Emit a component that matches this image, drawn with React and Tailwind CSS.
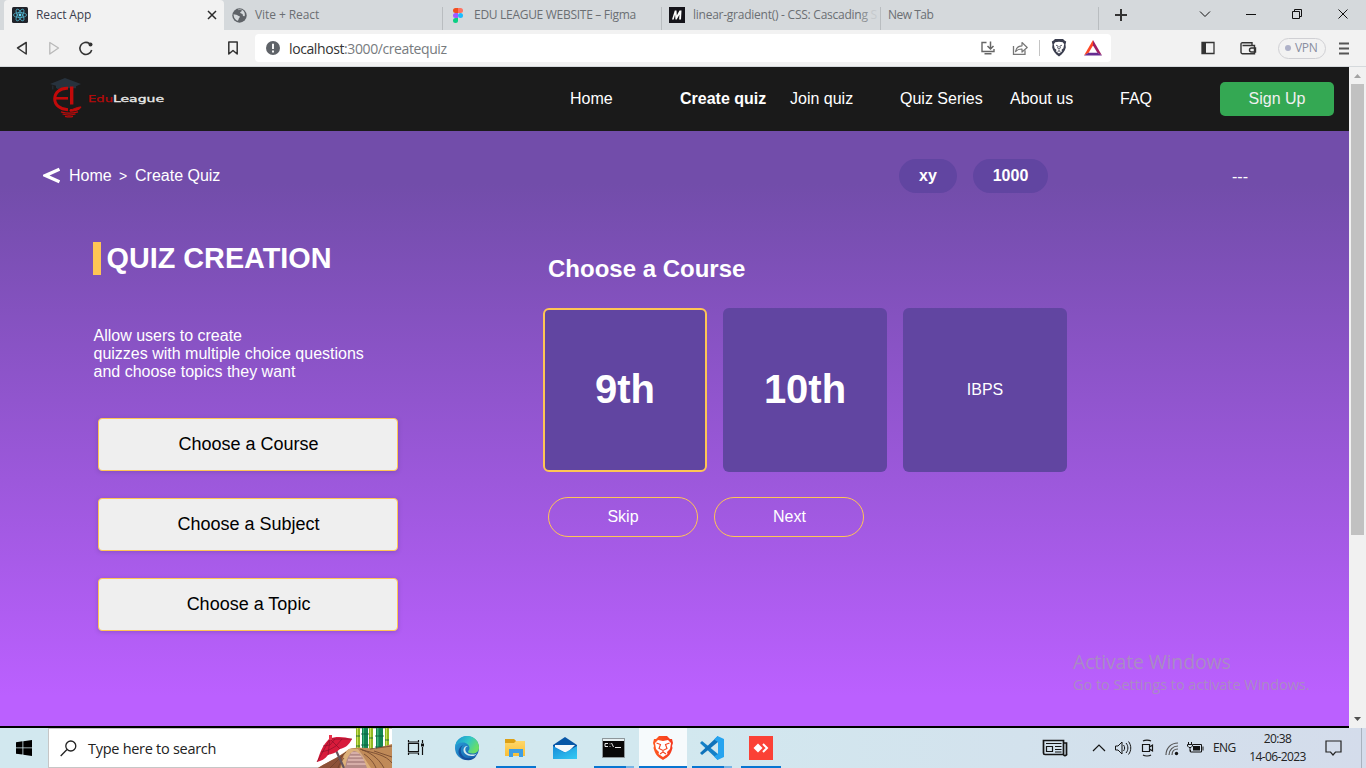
import React from "react";

const ui = "font-['Open_Sans','Noto_Sans',sans-serif]";

function ReactLogo() {
  return (
    <svg className="size-4 shrink-0" viewBox="0 0 16 16">
      <rect width="16" height="16" rx="1.5" fill="#20232a" />
      <g fill="none" stroke="#4fb3cc" strokeWidth="0.8">
        <ellipse cx="8" cy="8" rx="6.6" ry="2.5" />
        <ellipse cx="8" cy="8" rx="6.6" ry="2.5" transform="rotate(60 8 8)" />
        <ellipse cx="8" cy="8" rx="6.6" ry="2.5" transform="rotate(120 8 8)" />
      </g>
      <circle cx="8" cy="8" r="1.4" fill="#61dafb" />
    </svg>
  );
}

function GlobeIcon() {
  return (
    <svg className="size-[15px] shrink-0" viewBox="0 0 15 15">
      <circle cx="7.5" cy="7.5" r="7.2" fill="#5f6368" />
      <path d="M1.6 6.2c2 .2 3.4.6 4.200 1.400.5.600 1.400.200 1.900.900.500.800-.5 1.300-.9 2-.3.600-.2 1.400-1 2.300C3.500 12.200 1.500 9.500 1.600 6.200z" fill="#d5d9dc" />
      <path d="M6 2.300c1.500-.9 3-.4 4 .2-.2 1-1 1-1.600 1.500-.6.600.1 1.300.900 1.400 1 .2 1.600.8 1.500 1.700-.1 1 .8 1.300 1.900.9C13.500 5 12 2 8.500 1.400 7 1.200 5.800 1.700 6 2.300z" fill="#d5d9dc" />
    </svg>
  );
}

function FigmaIcon() {
  return (
    <svg className="h-[15px] w-2.5 shrink-0" viewBox="0 0 10 15">
      <path d="M2.500 0H5v5H2.500a2.500 2.500 0 010-5z" fill="#f24e1e" />
      <path d="M5 0h2.500a2.500 2.500 0 010 5H5z" fill="#ff7262" />
      <path d="M2.500 5H5v5H2.500a2.500 2.500 0 010-5z" fill="#a259ff" />
      <circle cx="7.500" cy="7.500" r="2.500" fill="#1abcfe" />
      <path d="M2.500 10H5v2.500A2.500 2.500 0 112.500 10z" fill="#0acf83" />
    </svg>
  );
}

function MdnIcon() {
  return (
    <svg className="size-4 shrink-0" viewBox="0 0 16 16">
      <rect width="16" height="16" fill="#15141a" />
      <path d="M3 12.500L5.800 3.500h1.700l.3 5 2.700-5h2l-.5 9h-1.900l.4-5-2.800 5H6.500l-.4-5-1.400 5z" fill="#fff" />
    </svg>
  );
}

function Tabs() {
  return (
    <div className={`flex h-[30px] bg-[#d5d9dc] pl-1 text-[12px] text-[#6b6f73] ${ui}`}>
      <div className="flex w-[220px] items-center rounded-t bg-[#f2f2f2] pl-2 text-[#3b3e4f]">
        <ReactLogo />
        <span className="ml-2 flex-1 whitespace-nowrap tracking-[-0.1px]">React App</span>
        <svg className="mr-[7px] size-2.5" viewBox="0 0 10 10"><path d="M1 1l8 8M9 1L1 9" stroke="#2b2b2b" strokeWidth="1.500" /></svg>
      </div>
      <div className="flex w-[218px] items-center pl-2">
        <GlobeIcon />
        <span className="ml-2 whitespace-nowrap tracking-[-0.080px]">Vite + React</span>
      </div>
      <div className="flex w-[219px] items-center">
        <i className="mt-[7px] h-[23px] w-px bg-[#b9bdc0]" />
        <span className="ml-2.5 flex"><FigmaIcon /></span>
        <span className="ml-[11px] whitespace-nowrap tracking-[-0.290px]">EDU LEAGUE WEBSITE – Figma</span>
      </div>
      <div className="flex w-[219px] items-center">
        <i className="mt-[7px] h-[23px] w-px shrink-0 bg-[#b9bdc0]" />
        <span className="ml-[7px] flex"><MdnIcon /></span>
        <span className="ml-2 whitespace-nowrap tracking-[-0.250px]">linear-gradient() - CSS: Cascadin<span className="text-[#8d9194]">g</span> <span className="text-[#c6cacd]">S</span></span>
      </div>
      <div className="flex w-[219px] items-center">
        <i className="mt-[7px] h-[23px] w-px bg-[#b9bdc0]" />
        <span className="ml-[7px] flex-1 whitespace-nowrap tracking-[-0.500px]">New Tab</span>
        <i className="mt-[7px] h-[23px] w-px bg-[#b9bdc0]" />
      </div>
      <svg className="h-[30px] w-[267px]" viewBox="1099 0 267 30" fill="none" stroke="#111">
        <path d="M1115 15h12M1121 9v12" stroke="#333" strokeWidth="2" />
        <path d="M1200 11.500l5 5 5-5" />
        <path d="M1246 14.500h10" />
        <path d="M1292.500 11.500h7v7h-7zM1294.500 11.500v-2h7v7h-2" />
        <path d="M1338.500 9.500l9 9M1347.500 9.500l-9 9" />
      </svg>
    </div>
  );
}

function Toolbar() {
  return (
    <div className={`flex h-[37px] items-center border-b border-[#d5d9dc] bg-[#f2f2f2] ${ui}`}>
      <svg className="h-9 w-[255px] shrink-0" viewBox="0 30 255 36" fill="none" strokeLinejoin="round">
        <path d="M26.200 42.500v11.500L17.500 48z" stroke="#333" strokeWidth="1.500" />
        <path d="M49.800 42.500v11.500l8.700-6z" stroke="#b9b9b9" strokeWidth="1.300" />
        <path d="M89.500 43.600A6 6 0 1 0 91.700 50" stroke="#333" strokeWidth="1.600" />
        <circle cx="90.500" cy="44.600" r="2" fill="#333" />
        <path d="M228.800 42h8.400v12l-4.200-3.500-4.200 3.500z" stroke="#333" strokeWidth="1.500" />
      </svg>
      <div className="flex h-7 w-[856px] shrink-0 items-center rounded bg-white">
        <svg className="ml-[11px] size-[14px]" viewBox="0 0 14 14">
          <circle cx="7" cy="7" r="7" fill="#5f6368" />
          <path d="M7 2.800v5.200M7 9.600v1.800" stroke="#fff" strokeWidth="1.900" />
        </svg>
        <span className="ml-[9px] flex-1 whitespace-nowrap text-[14px] tracking-[-0.4px] text-[#777b7e]">
          <span className="text-[#333]">localhost</span>:3000/createquiz
        </span>
        <svg className="h-7 w-[134px]" viewBox="977 34 134 28" fill="none">
          <path d="M986.500 42.500h-4.500v9h12V49M984.500 53.800h7" stroke="#666" strokeWidth="1.400" />
          <path d="M990.500 41.500v7M987.500 46l3 3 3-3" stroke="#666" strokeWidth="1.500" />
          <path d="M1013.500 46v8.300h11.500v-4" stroke="#777" strokeWidth="1.300" />
          <path d="M1015.500 51.500c.5-3.800 3-5.500 6.500-5.700v-3.300l5.200 5-5.200 4.500v-3c-3-.1-4.800.8-6.500 2.500z" stroke="#777" strokeWidth="1.200" strokeLinejoin="round" />
          <path d="M1039.500 40v16" stroke="#c4c4c4" />
          <path d="M1055 39h8l1.500 1.500 1.700 1-.7 3 .3 3c-.8 3.500-3 6.300-6.800 9-3.800-2.700-6-5.500-6.800-9l.3-3-.7-3 1.700-1z" fill="#3b3e4f" />
          <path d="M1055.200 42.300l3.800-.6 3.800.6 1.400 2-.8 3.900-1.800 1.500.3 1.700-2.900 2.200-2.900-2.200.3-1.700-1.800-1.500-.8-3.900z" fill="#fff" />
          <path d="M1056 45.200l2.200.9-.6 2 1.400.8 1.400-.8-.6-2 2.200-.9M1059 49.500v1.400l-1.500.8M1059 50.900l1.500.8" stroke="#3b3e4f" strokeWidth=".8" />
          <path d="M1093 40l-9 15.500 4.500-2.500 4.500-7.500z" fill="#ff4724" />
          <path d="M1093 40l9 15.500-4.500-2.500-4.500-7.500z" fill="#9e1f63" />
          <path d="M1084 55.500l4.500-2.700h9l4.500 2.700z" fill="#662d91" />
        </svg>
      </div>
      <svg className="h-9 w-[167px]" viewBox="1111 30 167 36" fill="none">
        <path d="M1202 42.500h12v11h-12z" stroke="#333" strokeWidth="1.300" />
        <path d="M1202 42.500h4v11h-4z" fill="#333" />
        <path d="M1242.500 45.500h12v8.200h-12a1.500 1.500 0 01-1.500-1.500v-8.200a1.200 1.200 0 011.500-1.200h9.500v2.500M1255.500 48h-4a2 2 0 000 4h4z" stroke="#333" strokeWidth="1.400" />
      </svg>
      <div className="flex h-[21px] w-12 items-center rounded-full border border-[#d0d0d4] pl-[6px] text-[12px] tracking-[-0.3px] text-[#888da0]">
        <i className="mr-1 size-1.5 rounded-full bg-[#aeb1c8]" />VPN
      </div>
      <svg className="ml-[13px] h-[13px] w-2.5" viewBox="0 0 10 13"><path d="M0 1.500h10M0 6.500h10M0 11.500h10" stroke="#555" strokeWidth="1.900" /></svg>
    </div>
  );
}

function EduLogo() {
  return (
    <svg className="ml-[48px] h-11 w-[120px] self-center" viewBox="48 77 120 44">
      <path d="M50 84l15-6 16 6-5 2.300v2H69c-4-1.600-8-1-11 1l-2-1.500v-2z" fill="#27323d" />
      <path d="M52.800 85.500v4" stroke="#27323d" />
      <g fill="none" stroke="#c20a0a">
        <path d="M68 88.200c-8-.5-13.300 4.500-13.300 10.600S60 109.500 68 109.800" strokeWidth="3" />
        <path d="M56 98.300h12" strokeWidth="2.600" />
        <path d="M71.700 86.500v18" strokeWidth="3.400" />
        <path d="M70 109.800c3.500 0 6-2.700 11-2.900-1 2.500-4 4-11 4.300z" strokeWidth="1" fill="#c20a0a" />
        <path d="M61 111.800c5 1.600 11 1.600 17 0M62.500 114c4 1.300 9 1.300 13 0M65 116.300c3 .7 6 .7 8 0" strokeWidth="1.300" />
      </g>
      <text x="88" y="102" fontFamily="DejaVu Sans" fontSize="9.500" fill="#b80a0a" stroke="#b80a0a" strokeWidth=".25" textLength="25" lengthAdjust="spacingAndGlyphs">Edu</text>
      <text x="113" y="102" fontFamily="DejaVu Sans" fontSize="9.500" fill="#e8e8e8" stroke="#e8e8e8" strokeWidth=".35" textLength="51" lengthAdjust="spacingAndGlyphs">League</text>
    </svg>
  );
}

const navItems = ["Home", "Create quiz", "Join quiz", "Quiz Series", "About us", "FAQ"];

function Navbar() {
  return (
    <nav className="flex h-16 items-center bg-[#1a1a1a] text-[16px] text-white">
      <EduLogo />
      <ul className="ml-[402px] flex">
        {navItems.map((n) => (
          <li key={n} className={n === "Create quiz" ? "w-[110px] whitespace-nowrap font-bold" : n === "FAQ" ? "w-[100px]" : "w-[110px] whitespace-nowrap"}>{n}</li>
        ))}
      </ul>
      <button className="h-[34px] w-[114px] rounded-[5px] bg-[#34a853] text-[#f0f0f0]">Sign Up</button>
    </nav>
  );
}

function QuizPage() {
  return (
    <main className="h-[595px] bg-[linear-gradient(180deg,#724daa_8.85%,#bb60ff_95%)] pt-7 text-[16px] text-white">
      <div className="flex h-[34px] items-center">
        <svg className="mb-0.5 ml-[43px] h-[17px] w-[17px]" viewBox="0 0 17 17"><path d="M16.500 2.200L2.500 8.500l14 6.300" fill="none" stroke="#fff" strokeWidth="3.400" /></svg>
        <span className="ml-[9px] w-[50px]">Home</span>
        <span className="w-4 text-[14px]">&gt;</span>
        <span className="w-[764px]">Create Quiz</span>
        <span className="flex h-[34px] w-[58px] items-center justify-center rounded-full bg-[#6145a1] font-bold">xy</span>
        <span className="ml-4 flex h-[34px] w-[75px] items-center justify-center rounded-full bg-[#6145a1] font-bold">1000</span>
        <span className="ml-[184px] pt-0.5">---</span>
      </div>
      <div className="flex">
        <section className="ml-[93px] mt-[49px] w-[450px]">
          <h1 className="border-l-8 border-[#ffc554] pl-[5.500px] text-[28.8px] font-bold leading-[32px] pb-px">QUIZ CREATION</h1>
          <p className="mt-[52px] pl-[0.500px] leading-[18px]">
            Allow users to create<br />quizzes with multiple choice questions<br />and choose topics they want
          </p>
          <div className="ml-[5px] mt-[37px] flex w-[300px] flex-col gap-[27px] text-[18px] text-black">
            {["Choose a Course", "Choose a Subject", "Choose a Topic"].map((t) => (
              <button key={t} className="h-[53px] rounded border border-[#ffc554] bg-[#efefef] pb-px pl-px shadow-[0_1px_4px_rgba(90,60,130,0.35)]">{t}</button>
            ))}
          </div>
        </section>
        <section className="mt-[62px]">
          <h2 className="ml-[5px] text-[24px] font-bold leading-7">Choose a Course</h2>
          <div className="mt-[25px] flex gap-4">
            <div className="flex size-[164px] items-center justify-center rounded-md border-2 border-[#ffc554] bg-[#6145a1] pb-0.5 text-[40px] font-bold">9th</div>
            <div className="flex size-[164px] items-center justify-center rounded-md bg-[#6145a1] pb-0.5 text-[40px] font-bold">10th</div>
            <div className="flex size-[164px] items-center justify-center rounded-md bg-[#6145a1]">IBPS</div>
          </div>
          <div className="ml-[5px] mt-[25px] flex gap-4">
            <button className="h-10 w-[150px] rounded-full border border-[#ffc554] pb-px">Skip</button>
            <button className="h-10 w-[150px] rounded-full border border-[#ffc554] pb-px pl-px">Next</button>
          </div>
        </section>
      </div>
    </main>
  );
}

function Scrollbar() {
  return (
    <div className="flex w-[17px] flex-col items-center bg-[#f1f1f1]">
      <svg className="h-[17px] w-[17px]" viewBox="0 0 17 17"><path d="M5 11l3.500-4 3.500 4z" fill="#a3a3a3" /></svg>
      <div className="h-[451px] w-[13px] bg-[#c1c1c1]" />
      <svg className="mt-auto h-[17px] w-[17px]" viewBox="0 0 17 17"><path d="M5 6l3.500 4L12 6z" fill="#505050" /></svg>
    </div>
  );
}

function SearchArt() {
  return (
    <svg className="h-10 w-[76px]" viewBox="316 728 76 40">
      <path d="M356 728h4v26h-4zM369 728h4v26h-4zM385 728h4v28h-4z" fill="#91b821" />
      <path d="M362 728h6v26h-6zM376 728h7v28h-7z" fill="#108354" />
      <path d="M357 728h1v26h-1zM370 728h1v26h-1zM386 728h1v28h-1z" fill="#c8df59" />
      <path d="M363 728h1v26h-1zM377 728h1.500v28h-1.500z" fill="#3fb47c" />
      <path d="M356 736h4M356 746h4M361 734h8M361 745h8M369 738h4M375 736h9M375 747h9M385 740h4" stroke="#0a583c" strokeWidth=".8" />
      <path d="M318 768c9-6 17-8 31-19 8-2 18-1 25 0l18-5v24z" fill="#c08a58" />
      <path d="M318 768c9-6 18-9 26-15l-4 15z" fill="#8c5138" />
      <path d="M345 768c1-9 4-18 9-18 8 0 11 8 15 18z" fill="#b58b88" />
      <path d="M351 753h8M349.500 756.500h12M348 760h16M347 764h19" stroke="#e1bbb2" strokeWidth="1.300" />
      <path d="M349 749h9l13 19h-4c-3-9-6-16-13-17-5 2-8 9-9 17h-4c1-9 4-16 8-19z" fill="#dcb07a" />
      <path d="M360 749c9 3 18 8 24 19M362 750c12 3 24 5 30 13M346 752c-6 6-10 10-16 16M344 758c-4 5-5 7-6 10M364 754c6 4 10 9 12 14M370 749l22-3M374 751l18 6" stroke="#6d432c" fill="none" strokeWidth=".8" />
      <path d="M334 746l10 22" stroke="#65545c" strokeWidth="2.200" />
      <path d="M317 762c3-9 5-16 12-23 7-3 15-2 23 0-3 6-7 9-12 10-4 4-9 5-12 6-3 4-7 6-11 7z" fill="#d81b3b" />
      <path d="M330 739l-13 23M330 739l-2 16M330 739l10 10M330 739l22 0M321 752l8-2 7-4 6-7M323 746l7-1 5-6" stroke="#8c1029" fill="none" strokeWidth=".7" />
      <path d="M329 735h3v5h-3z" fill="#e8314b" />
    </svg>
  );
}

function TaskIcons() {
  return (
    <svg className="h-10 w-[400px] shrink-0" viewBox="392 728 400 40">
      <defs>
        <linearGradient id="edgeBlue" x1="0" y1="0" x2="1" y2="1"><stop stopColor="#2aa5dc" /><stop offset="1" stopColor="#1557a8" /></linearGradient>
        <linearGradient id="edgeTop" x1="0" y1="0" x2="1" y2=".5"><stop stopColor="#178ed6" /><stop offset=".55" stopColor="#32c6c7" /><stop offset="1" stopColor="#6adf65" /></linearGradient>
        <linearGradient id="folder" x1="0" y1="0" x2="0" y2="1"><stop stopColor="#ffda70" /><stop offset="1" stopColor="#f9bf37" /></linearGradient>
        <linearGradient id="mail" x1="0" y1="0" x2="1" y2="1"><stop stopColor="#168bd8" /><stop offset="1" stopColor="#35cbf4" /></linearGradient>
        <linearGradient id="lion" x1="0" y1="0" x2="1" y2="0"><stop stopColor="#ff5a21" /><stop offset="1" stopColor="#f4381f" /></linearGradient>
      </defs>
      <g stroke="#111" fill="none">
        <path d="M408.500 743.500h10v8h-10zM408.500 740v2h10v-2M408.500 755v-2h10v2M422.500 740v3M422.500 747v8" strokeWidth="1.200" />
        <path d="M421 743.500h3v3h-3z" fill="#111" stroke="none" />
      </g>
      <circle cx="467" cy="748" r="12" fill="url(#edgeBlue)" />
      <path d="M455 747c1-7 6-11 12-11 8 0 12 6 12 11.500 0 4-3 6-6.500 6-3 0-4.500-1-4.500-2 0-.8 1.500-1.200 1.500-3.500 0-3-3-5.500-6.500-5.500-4 0-7 2-8 4.500z" fill="url(#edgeTop)" />
      <path d="M463 745c-3 3-3 8 0 11 3 3 8 3 13.500 0-4 5-9 5-13.500 3-6-4-6-11 0-14z" fill="#174f9c" />
      <path d="M468 746c-3 1-3.500 4-1.500 6.500 2.500 2.500 7 2.700 10.500.9-1.500 1.600-3 2.600-5 2.600-5 .3-9-3-8.500-6.500.3-2 2-4 4.500-3.500z" fill="#d5e9f0" />
      <path d="M505 739h9l2 2h9v15h-20z" fill="url(#folder)" />
      <path d="M505 739h9l2 2-2 2h-9z" fill="#dca016" />
      <path d="M509 757v-8h14v8h-4v-4h-6v4z" fill="#3e9ee3" />
      <path d="M553 745l12-8 12 8v14h-24z" fill="#0756a6" />
      <path d="M555 745h20l-8 8-12-3z" fill="#f5f8fb" />
      <path d="M553 746l13 7-13 6z" fill="#168dd9" />
      <path d="M553 759v-12l24 12zM577 746v13h-24z" fill="url(#mail)" />
      <path d="M602.500 738.500h22v19h-22z" fill="#080808" stroke="#8d969a" />
      <path d="M603 739h21v2h-21z" fill="#e6eef0" />
      <path d="M608 743.500h-3v3h3M610 743.500v.8M610 746v.8M611.500 743l2 4M615 747.500h6" stroke="#e9e9e9" fill="none" />
      <path d="M639 728h48v40h-48z" fill="#f6fafc" />
      <path d="M659 736h8l3 3h2l1 4-1 3 .5 2c-1.500 6-4 9-9.500 12-5.500-3-8-6-9.500-12l.5-2-1-3 1-4h2z" fill="url(#lion)" />
      <path d="M658 740l5 1 5-1 3 3-1 6-3 3 .5 2-4.500 3-4.500-3 .5-2-3-3-1-6z" fill="#fff" />
      <path d="M656.500 743l4 1.500-1.500 4 4 2 4-2-1.500-4 4-1.500M663 750v2l-3 2M663 752l3 2" stroke="#f4431f" fill="none" strokeWidth="1.100" />
      <path d="M700 743l2-2 16 13v6z" fill="#1480c7" />
      <path d="M700 753l2 2 16-13v-6z" fill="#0f72ba" />
      <path d="M717.500 736l6.500 3v18l-6.500 3-3.500-3.500 4-2.500v-12l-4-2.500z" fill="#27a4ef" />
      <path d="M749 736h24v24h-24z" fill="#fb4136" />
      <path d="M758 743.500l4.500 4.500-4.500 4.500-4.500-4.500z" fill="#fff" />
      <path d="M763 744l4 4-4 4" stroke="#fff" strokeWidth="2" fill="none" />
      <path d="M496 766h40v2h-40zM594 766h32v2h-32zM639 766h48v2h-48zM692 766h32v2h-32zM741 766h40v2h-40z" fill="#0875d1" />
      <path d="M626 766h8v2h-8zM724 766h8v2h-8z" fill="#77b4e5" />
    </svg>
  );
}

function Taskbar() {
  return (
    <footer className={`flex h-10 items-center bg-gradient-to-r from-[#d2e8ef] from-50% to-[#d4dceb] text-[#222] ${ui}`}>
      <svg className="ml-4 h-4 w-4 shrink-0" viewBox="0 0 16 16"><path d="M0 2.200L6.500 1.300v6.200H0zM7.300 1.200L16 0v7.500H7.300zM0 8.300h6.500v6.200L0 13.700zM7.300 8.300H16V16l-8.700-1.300z" fill="#000" /></svg>
      <div className="ml-4 flex h-10 w-[344px] shrink-0 items-center border border-r-0 border-[#c6c6c6] bg-white">
        <svg className="ml-[11px] h-[17px] w-[17px]" viewBox="0 0 17 17" fill="none" stroke="#222" strokeWidth="1.300"><circle cx="10.800" cy="6" r="5" /><path d="M7 9.500L.700 16" /></svg>
        <span className="ml-[11px] flex-1 whitespace-nowrap pt-px text-[14.500px] tracking-[-0.280px]">Type here to search</span>
        <SearchArt />
      </div>
      <TaskIcons />
      <svg className="h-10 w-[418px] shrink-0" viewBox="792 728 418 40" fill="none" stroke="#151515" strokeWidth="1.200">
        <path d="M1043.500 740.500h20v14h-18.500a1.500 1.500 0 01-1.500-1.500zM1063.500 743h3v10.500a1.500 1.500 0 01-3 1" strokeWidth="1.700" />
        <path d="M1046 743.500h15.500M1055 746.500h6.500M1055 749.500h6.500M1055 752h6.500M1046.500 746.500h6v5h-6z" />
        <path d="M1093 751l6-6 6 6" />
        <path d="M1115.500 746h2.500l4-4v12l-4-4h-2.500zM1123.500 745c1.500 2 1.500 4 0 6M1126 743c2.500 3 2.500 7 0 10M1128.500 741.500c3 4 3 9 0 13" strokeWidth="1" />
        <path d="M1142.500 744.500h7v7h-7zM1149.500 747l3-2v6l-3-2M1143 741c2-1.300 6-1.300 8 0M1143 755c2 1.300 6 1.300 8 0" />
        <path d="M1166 755c0-7 5-12 12-12M1169 755c0-5 4-9 9-9M1172 755c0-4 2-6 6-6" stroke="#555" />
        <circle cx="1176.500" cy="753.500" r="1.700" fill="#111" stroke="none" />
        <path d="M1193 744.500h8.500v7.500h-11v-2M1203 746.500v4" strokeWidth="1" />
        <path d="M1193 746h7v4.500h-7z" fill="#111" stroke="none" />
        <path d="M1188.500 742v2.500M1191.500 742v2.500M1187.500 744.500h5v1.500l-1.500 1.500h-2l-1.500-1.500zM1190 748v3.500" strokeWidth="1" />
      </svg>
      <span className="ml-[3px] w-9 whitespace-nowrap text-[12px] tracking-[-0.6px]">ENG</span>
      <div className="flex w-[57px] shrink-0 flex-col items-center whitespace-nowrap text-[12px] leading-[18px] tracking-[-0.6px]">
        <span>20:38</span><span>14-06-2023</span>
      </div>
      <svg className="ml-[19px] h-4 w-[17px]" viewBox="0 0 17 16"><path d="M1 1h15v11h-5.500L8 15l-2.500-3H1z" fill="none" stroke="#222" strokeWidth="1.200" /></svg>
      <i className="ml-auto mr-1 h-10 w-px bg-[#a9b2be]" />
    </footer>
  );
}

export default function App() {
  return (
    <div className="relative h-[768px] w-[1366px] overflow-hidden font-['Liberation_Sans',Arial,sans-serif]">
      <Tabs />
      <Toolbar />
      <div className="flex h-[661px]">
        <div className="w-[1349px] border-b-2 border-black">
          <Navbar />
          <QuizPage />
        </div>
        <Scrollbar />
      </div>
      <Taskbar />
      <div className={`absolute left-[1073px] top-[650px] whitespace-nowrap text-[#a98bc4] ${ui}`}>
        <p className="text-[19.500px] leading-6 tracking-[-0.150px]">Activate Windows</p>
        <p className="text-[14.500px] leading-[21px] tracking-[-0.030px]">Go to Settings to activate Windows.</p>
      </div>
    </div>
  );
}
